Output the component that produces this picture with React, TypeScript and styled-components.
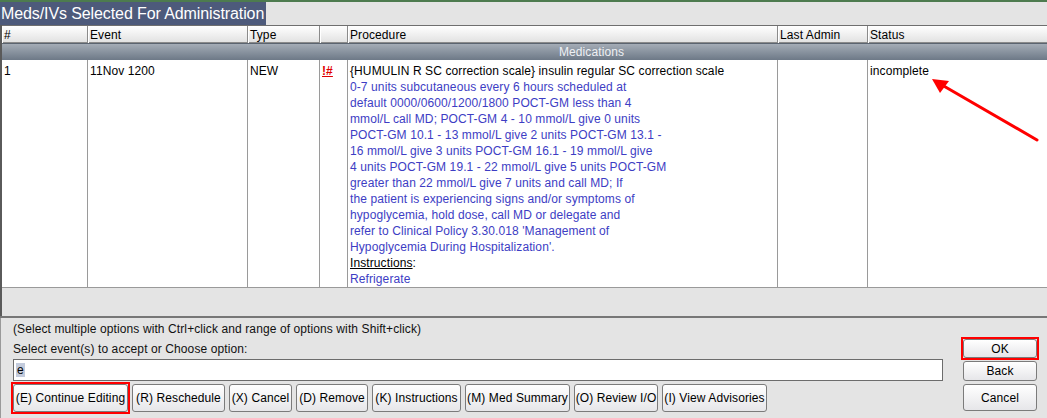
import styled, { createGlobalStyle } from 'styled-components';

const GlobalStyle = createGlobalStyle`
	html, body {
		margin: 0;
		padding: 0;
		background: #e4e4e4;
		overflow: hidden;
	}
	body {
		font-family: "Liberation Sans", Arial, sans-serif;
		font-size: 12px;
		letter-spacing: 0.1px;
		color: #000;
	}
`;

const COLS = '86px 160px 72px 28px 430px 90px 1fr';

const Page = styled.div`
	position: relative;
	width: 1047px;
	height: 418px;
	display: flex;
	flex-direction: column;
	background: #e4e4e4;
`;

const TopStripe = styled.div`
	height: 2px;
	background: #4d7b4f;
`;

const TitleBar = styled.div`
	height: 23px;
	display: flex;
	align-items: stretch;
`;

const Title = styled.span`
	background: #4d5a7b;
	color: #fff;
	font-size: 16px;
	letter-spacing: -0.1px;
	line-height: 24px;
	padding: 0 2px 0 1px;
`;

const TablePane = styled.div`
	height: 291px;
	border-left: 2px solid #5a5a5a;
	display: flex;
	flex-direction: column;
`;

const Row = styled.div`
	display: grid;
	grid-template-columns: ${COLS};
`;

const HeaderRow = styled(Row)`
	height: 16px;
	border-top: 1px solid #6f6f6f;
	background: linear-gradient(#ffffff, #e2e2e2);
	border-bottom: 1px solid #8a8a8a;
`;

const HeaderCell = styled.div`
	padding-left: 2px;
	line-height: 18px;
	border-right: 1px solid #8a8a8a;
	box-shadow: inset 1px 0 0 #ffffff;
	white-space: nowrap;
	&:last-child {
		border-right: none;
	}
`;

const GroupRow = styled.div`
	height: 16px;
	line-height: 16px;
	text-align: center;
	padding-left: 134px;
	color: #eef0f4;
	border-top: 1px solid #5b6470;
	background: linear-gradient(#a4acb6, #6d7987);
`;

const DataRow = styled(Row)`
	background: #fff;
	border-bottom: 1px solid #9a9a9a;
`;

const Cell = styled.div`
	padding: 3px 0 0 2px;
	line-height: 16px;
	border-right: 1px solid #9a9a9a;
	&:last-child {
		border-right: none;
	}
`;

const Flag = styled.span`
	color: #e00000;
	font-weight: bold;
	text-decoration: underline;
`;

const Line = styled.div<{ $tone?: 'blue' | 'black' }>`
	white-space: nowrap;
	color: ${p => (p.$tone === 'blue' ? '#3d3dc4' : '#000')};
`;

const Underlined = styled.span`
	text-decoration: underline;
`;

const Divider = styled.div`
	border-top: 2px solid #777;
`;

const Bottom = styled.div`
	flex: 1;
	display: grid;
	grid-template-columns: 1fr 74px;
	column-gap: 20px;
	padding: 3px 10px 0 12px;
	border-left: 1px solid #9a9a9a;
`;

const LeftCol = styled.div`
	display: flex;
	flex-direction: column;
`;

const Hint = styled.div<{ $after?: number }>`
	line-height: 16px;
	margin-bottom: ${p => p.$after ?? 0}px;
	color: #111;
`;

const Input = styled.div`
	margin-top: 2px;
	height: 20px;
	background: #fff;
	border: 1px solid #6c6c6c;
	display: flex;
	align-items: center;
	padding-left: 2px;
`;

const Selected = styled.span`
	background: #c3cbdc;
	line-height: 14px;
	padding: 0 1px;
`;

const ButtonRow = styled.div`
	margin-top: 3px;
	display: flex;
	gap: 4px;
`;

const Button = styled.button<{ $h?: number; $w?: number }>`
	height: ${p => p.$h ?? 28}px;
	width: ${p => (p.$w ? `${p.$w}px` : '100%')};
	padding: 0;
	font-family: inherit;
	font-size: 12px;
	letter-spacing: 0.1px;
	color: #000;
	border: 1px solid #7b7b7b;
	border-radius: 3px;
	background: linear-gradient(#ffffff, #e6e6e9);
	white-space: nowrap;
`;

// red annotation box drawn round a button, without taking layout space
const Mark = styled.div`
	display: flex;
	margin: -2px;
	border: 2px solid #f00;
`;

const RightCol = styled.div`
	display: flex;
	flex-direction: column;
	gap: 3px;
	padding-top: 18px;
`;

const Arrow = styled.svg`
	position: absolute;
	left: 0;
	top: 0;
	pointer-events: none;
`;

const procedure = [
	'0-7 units subcutaneous every 6 hours scheduled at',
	'default 0000/0600/1200/1800 POCT-GM less than 4',
	'mmol/L call MD; POCT-GM 4 - 10 mmol/L give 0 units',
	'POCT-GM 10.1 - 13 mmol/L give 2 units POCT-GM 13.1 -',
	'16 mmol/L give 3 units POCT-GM 16.1 - 19 mmol/L give',
	'4 units POCT-GM 19.1 - 22 mmol/L give 5 units POCT-GM',
	'greater than 22 mmol/L give 7 units and call MD; If',
	'the patient is experiencing signs and/or symptoms of',
	'hypoglycemia, hold dose, call MD or delegate and',
	"refer to Clinical Policy 3.30.018 'Management of",
	"Hypoglycemia During Hospitalization'."
];

const actions: [string, number][] = [
	['(E) Continue Editing', 115],
	['(R) Reschedule', 93],
	['(X) Cancel', 63],
	['(D) Remove', 72],
	['(K) Instructions', 89],
	['(M) Med Summary', 105],
	['(O) Review I/O', 84],
	['(I) View Advisories', 105]
];

export default function App() {
	return (
		<Page>
			<GlobalStyle />
			<TopStripe />
			<TitleBar>
				<Title>Meds/IVs Selected For Administration</Title>
			</TitleBar>
			<TablePane>
				<HeaderRow>
					<HeaderCell>#</HeaderCell>
					<HeaderCell>Event</HeaderCell>
					<HeaderCell>Type</HeaderCell>
					<HeaderCell />
					<HeaderCell>Procedure</HeaderCell>
					<HeaderCell>Last Admin</HeaderCell>
					<HeaderCell>Status</HeaderCell>
				</HeaderRow>
				<GroupRow>Medications</GroupRow>
				<DataRow>
					<Cell>1</Cell>
					<Cell>11Nov 1200</Cell>
					<Cell>NEW</Cell>
					<Cell>
						<Flag>!#</Flag>
					</Cell>
					<Cell>
						<Line>{'{HUMULIN R SC correction scale} insulin regular SC correction scale'}</Line>
						{procedure.map(l => (
							<Line key={l} $tone="blue">
								{l}
							</Line>
						))}
						<Line>
							<Underlined>Instructions</Underlined>:
						</Line>
						<Line $tone="blue">Refrigerate</Line>
					</Cell>
					<Cell />
					<Cell>incomplete</Cell>
				</DataRow>
			</TablePane>
			<Divider />
			<Bottom>
				<LeftCol>
					<Hint $after={4}>
						(Select multiple options with Ctrl+click and range of options with Shift+click)
					</Hint>
					<Hint>Select event(s) to accept or Choose option:</Hint>
					<Input>
						<Selected>e</Selected>
					</Input>
					<ButtonRow>
						{actions.map(([label, w], i) =>
							i === 0 ? (
								<Mark key={label}>
									<Button $w={w}>{label}</Button>
								</Mark>
							) : (
								<Button key={label} $w={w}>
									{label}
								</Button>
							)
						)}
					</ButtonRow>
				</LeftCol>
				<RightCol>
					<Mark>
						<Button $h={19}>OK</Button>
					</Mark>
					<Button $h={20}>Back</Button>
					<Button $h={27}>Cancel</Button>
				</RightCol>
			</Bottom>
			<Arrow width="1047" height="418" viewBox="0 0 1047 418">
				<line x1="1037" y1="140" x2="942" y2="85" stroke="#f00" strokeWidth="3" strokeLinecap="round" />
				<polygon points="932,79 949,81 940,93" fill="#f00" />
			</Arrow>
		</Page>
	);
}
